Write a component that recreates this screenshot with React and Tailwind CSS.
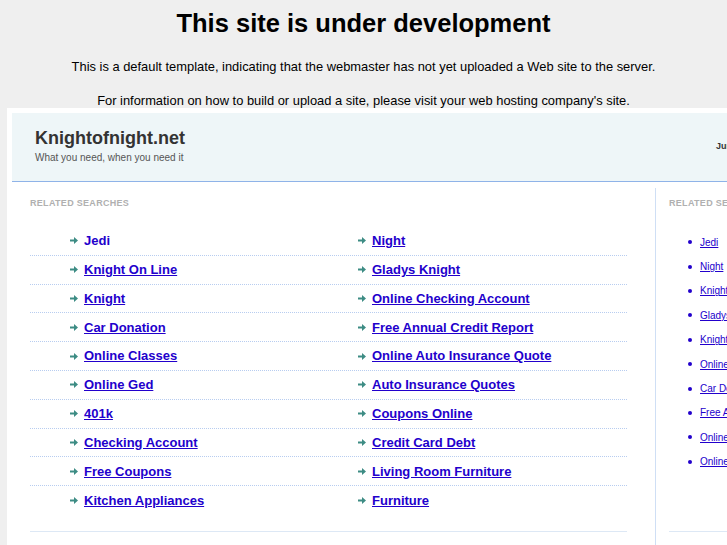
import React from 'react';

const leftItems = ['Jedi', 'Knight On Line', 'Knight', 'Car Donation', 'Online Classes', 'Online Ged', '401k', 'Checking Account', 'Free Coupons', 'Kitchen Appliances'];
const rightItems = ['Night', 'Gladys Knight', 'Online Checking Account', 'Free Annual Credit Report', 'Online Auto Insurance Quote', 'Auto Insurance Quotes', 'Coupons Online', 'Credit Card Debt', 'Living Room Furniture', 'Furniture'];
const sideItems = ['Jedi', 'Night', 'Knight On Line', 'Gladys Knight', 'Knight', 'Online Checking Account', 'Car Donation', 'Free Annual Credit Report', 'Online Classes', 'Online Auto Insurance Quote'];

const Arrow = () => (
    <svg width="8" height="7" viewBox="0 0 8 7" className="shrink-0">
        <path d="M0 2.5h4V0l4 3.5L4 7V4.5H0z" fill="#3d8c84" />
    </svg>
);

const SearchLink = ({ text, plain }) => (
    <a href="#" className={`flex items-center gap-[6px] text-[13px] font-bold text-[#2200cc] ${plain ? 'no-underline' : 'underline'}`}>
        <Arrow />
        <span>{text}</span>
    </a>
);

const App = () => {
    return (
        <div className="w-[727px] h-[545px] overflow-hidden bg-[#efefef] font-['Liberation_Sans',Arial,sans-serif]">
            <div className="text-center text-black">
                <h1 className="pt-[7px] text-[25.5px] font-bold leading-[32px]">This site is under development</h1>
                <p className="mt-[20px] text-[12.9px] leading-[16px]">This is a default template, indicating that the webmaster has not yet uploaded a Web site to the server.</p>
                <p className="mt-[19px] text-[12.9px] leading-[14px]">For information on how to build or upload a site, please visit your web hosting company's site.</p>
            </div>

            <div className="ml-[7px] w-[1000px] bg-white p-[5px] pb-0">
                <div className="flex h-[69px] border-b border-[#8fb3e8] bg-[#eef6f8]">
                    <div className="pl-[23px] pt-[14px] w-[704px]">
                        <div className="text-[18px] font-bold leading-[22px] text-[#333]">Knightofnight.net</div>
                        <div className="mt-[2px] text-[10px] leading-[13px] text-[#555]">What you need, when you need it</div>
                    </div>
                    <div className="pt-[27px] text-[9px] font-bold text-[#333]">June 14, 2011</div>
                </div>

                <div className="flex">
                    <div className="mt-[6px] w-[644px] border-r border-[#cfdff5] pl-[18px] pr-[28px] h-[400px]">
                        <div className="pt-[10px] text-[9px] font-bold leading-[11px] tracking-[0.3px] text-[#b0b0b0]">RELATED SEARCHES</div>
                        <div className="mt-[18px]">
                            {leftItems.map((item, i) => (
                                <div key={item} className={`flex h-[28.8px] items-center ${i < leftItems.length - 1 ? 'border-b border-dotted border-[#b8cdf0]' : ''}`}>
                                    <div className="w-[327px] pl-[40px]">
                                        <SearchLink text={item} plain={i === 0} />
                                    </div>
                                    <div className="pl-[1px]">
                                        <SearchLink text={rightItems[i]} />
                                    </div>
                                </div>
                            ))}
                        </div>
                        <div className="mt-[16px] border-t border-[#dde8f5]" />
                    </div>

                    <div className="mt-[6px] pl-[13px] w-[300px]">
                        <div className="pt-[10px] text-[9px] font-bold leading-[11px] tracking-[0.3px] text-[#b0b0b0]">RELATED SEARCHES</div>
                        <ul className="mt-[21px] pl-[19px]">
                            {sideItems.map((item) => (
                                <li key={item} className="flex h-[24.4px] items-center gap-[8px]">
                                    <span className="h-[4px] w-[4px] rounded-full bg-[#2200cc]" />
                                    <a href="#" className="text-[10px] text-[#2200cc] underline">{item}</a>
                                </li>
                            ))}
                        </ul>
                        <div className="mt-[57px] border-t border-[#dde8f5]" />
                    </div>
                </div>
            </div>
        </div>
    );
};

export default App;
